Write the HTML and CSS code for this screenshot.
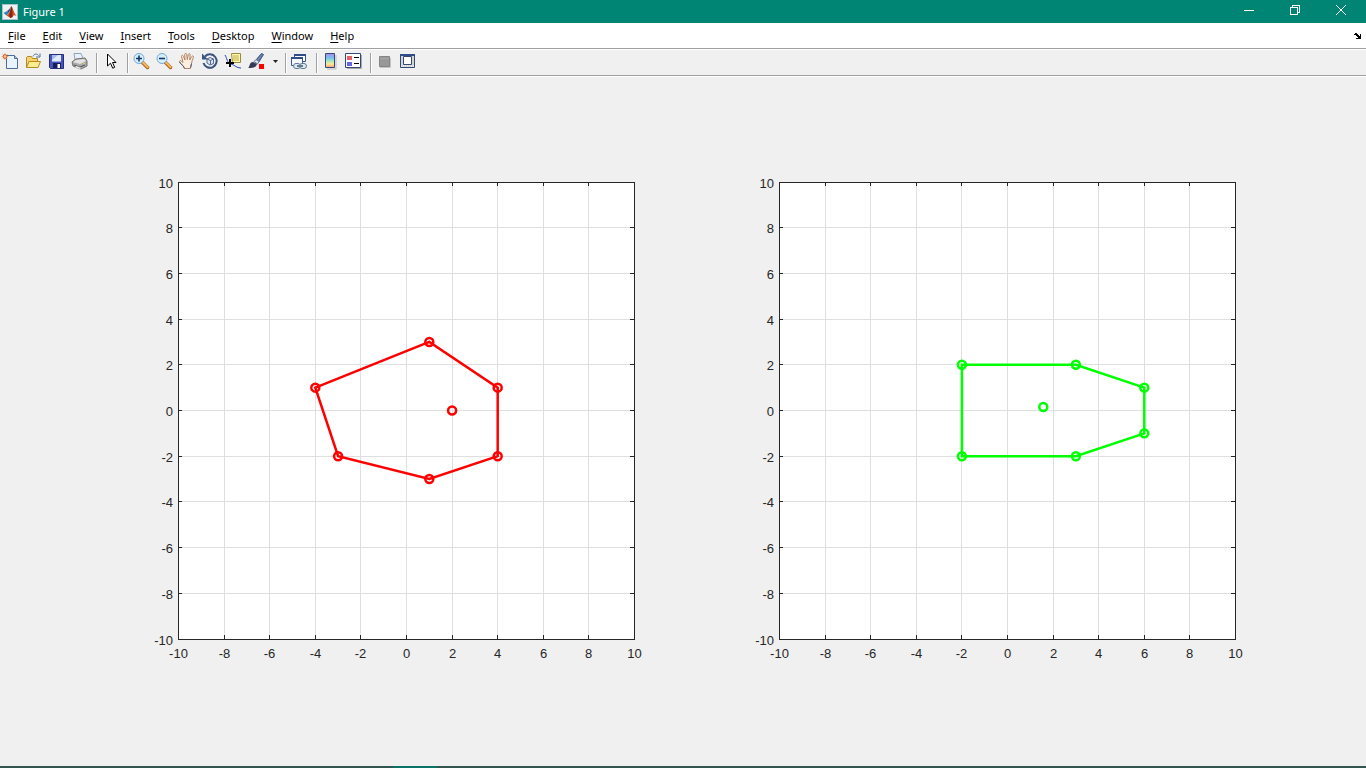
FILE: index.html
```html
<!DOCTYPE html>
<html lang="en">
<head>
<meta charset="utf-8">
<title>Figure 1</title>
<link rel="stylesheet" href="styles.css">
</head>
<body>
<div class="window">
  <header class="titlebar">
    <svg class="logo" width="16" height="16" viewBox="0 0 16 16" aria-hidden="true">
      <rect x=".5" y=".5" width="15" height="15" fill="#eef2f5" stroke="#a9c3cc"/>
      <path d="M1.500 9 5 7l2 2-2.500 2.500Z" fill="#3c7fb5"/>
      <path d="M5 7 7 5.500 9.500 2 7 9Z" fill="#28507c"/>
      <path d="M9.500 2C11 4 12 9 14.500 12c-2-1-3-1-4 1L8.500 14 4.500 11.500 7 9Z" fill="#d75420"/>
      <path d="M9.500 2c1 3 1 7 1 11L8.500 14 7 12Z" fill="#84251b"/>
    </svg>
    <h1 class="title">Figure 1</h1>
    <div class="controls">
      <button class="control" aria-label="Minimize"><svg width="12" height="12"><path d="M1 6.500h10"/></svg></button>
      <button class="control" aria-label="Restore"><svg width="12" height="12"><path d="M1.500 3.500h7v7h-7zM3.500 3V1.500h7v7H9"/></svg></button>
      <button class="control" aria-label="Close"><svg class="smooth" width="12" height="12"><path d="m1 1 10 10M11 1 1 11"/></svg></button>
    </div>
  </header>

  <nav class="menubar" aria-label="Menu">
    <button class="menu"><u>F</u>ile</button>
    <button class="menu"><u>E</u>dit</button>
    <button class="menu"><u>V</u>iew</button>
    <button class="menu"><u>I</u>nsert</button>
    <button class="menu"><u>T</u>ools</button>
    <button class="menu"><u>D</u>esktop</button>
    <button class="menu"><u>W</u>indow</button>
    <button class="menu"><u>H</u>elp</button>
    <button class="dock" aria-label="Dock figure"><svg width="8" height="6"><path d="M0 1h1V0h2v1h1v1h1v1h1V1h1v5H2V5h2V4H3V3H2V2H0Z" fill="#000"/></svg></button>
  </nav>

  <div class="toolbar" role="toolbar" aria-label="Figure toolbar">
    <button class="tool" aria-label="New figure"><svg width="18" height="18" viewBox="0 0 18 18">
      <path d="M5.500 3.500h8l3 3v10h-11z" fill="#e8f3fd" stroke="#4c6b9d"/><path d="M13.500 3.500v3h3" fill="#b5cbea" stroke="#4c6b9d"/>
      <path d="M4 1v7M.500 4.500h7M1.500 2l5 5M6.500 2l-5 5" stroke="#f2b48c"/><circle cx="4" cy="4.500" r="1.800" fill="#fbd08c" stroke="#d4552d"/></svg></button>
    <button class="tool" aria-label="Open file"><svg width="18" height="18" viewBox="0 0 18 18">
      <path d="M2.500 15.500v-10l1-1h4l1 2h5v9z" fill="#f5d36a" stroke="#b58b22"/><path d="m2.500 15.500 2.500-6h11.500l-2.500 6z" fill="#ffed91" stroke="#b58b22"/>
      <path d="M9 4.500c1-3 4-3 5.500-1M16 1.500v3.500h-4" fill="none" stroke="#4d6f94"/></svg></button>
    <button class="tool" aria-label="Save figure"><svg width="18" height="18" viewBox="0 0 18 18">
      <path d="M2.500 2.500h14v14h-13l-1-1z" fill="#4756bd" stroke="#252c84"/><path d="M5 3h9v6.500H5z" fill="#e2eafa"/><path d="M5 3h6L5 8z" fill="#a3b8f0"/><path d="M6 11h8v5H6z" fill="#171e55"/><path d="M10.500 12H13v4h-2.500z" fill="#fff"/></svg></button>
    <button class="tool" aria-label="Print figure"><svg width="18" height="18" viewBox="0 0 18 18">
      <path d="m5 8-1-6.500h7l2.500 6" fill="#e7f1fc" stroke="#90a4b9"/><path d="m2 10 4-3 9-1 2 3v5l-6 3-8-3z" fill="#aaa" stroke="#6f6f6f"/><path d="m3 10 7 2 6-3-2-2-8 1z" fill="#e4e4e4"/><path d="m4 13 6 2 5-2" fill="none" stroke="#505050"/><path d="m4.500 15 5 2 2-1-5-2z" fill="#fff" stroke="#999" stroke-width=".5"/><path d="M13 11h2v1h-2z" fill="#d7ce52"/></svg></button>
    <span class="sep"></span>
    <button class="tool" aria-label="Edit plot"><svg width="18" height="18" viewBox="0 0 18 18">
      <path d="M6.500 2v12l3-2.800 2.200 5 2-.9-2.200-4.800h3.500z" fill="#fff" stroke="#000"/></svg></button>
    <span class="sep"></span>
    <button class="tool" aria-label="Zoom in"><svg width="18" height="18" viewBox="0 0 18 18">
      <path d="m10.500 10.500 5 5" stroke="#a86825" stroke-width="3.500" stroke-linecap="round"/><path d="m11 10.500 4.500 4.500" stroke="#f5b85c" stroke-width="2" stroke-linecap="round"/><circle cx="7" cy="6.500" r="5" fill="#d5effb" stroke="#76a7d3"/><path d="M4 6.500h6M7 3.500v6" stroke="#16346f" stroke-width="1.600"/></svg></button>
    <button class="tool" aria-label="Zoom out"><svg width="18" height="18" viewBox="0 0 18 18">
      <path d="m10.500 10.500 5 5" stroke="#a86825" stroke-width="3.500" stroke-linecap="round"/><path d="m11 10.500 4.500 4.500" stroke="#f5b85c" stroke-width="2" stroke-linecap="round"/><circle cx="7" cy="6.500" r="5" fill="#d5effb" stroke="#76a7d3"/><path d="M4 6.500h6" stroke="#16346f" stroke-width="1.600"/></svg></button>
    <button class="tool" aria-label="Pan"><svg width="18" height="18" viewBox="0 0 18 18">
      <path d="M6.500 16.500c-1-3-3-4-5-6.500-.5-1.500 1.200-1.800 2-.8l1.500 1.300L3.500 4.500c0-1.500 1.500-1.500 2 0L7 8 6.700 2.500c0-1.500 1.800-1.500 2 0L9.300 7.500l1-5c.3-1.300 1.900-1 1.800.300l-.4 5.200 2.100-3.500c.7-1.200 2-.5 1.600.7-1 3-1.400 4-1.900 6.300l-1 5z" fill="#ffeedd" stroke="#b08466"/><path d="M1.500 10c1.500 2.500 4 3.500 5 6.500M13.500 11.500l-1 4" fill="none" stroke="#4c5680"/></svg></button>
    <button class="tool" aria-label="Rotate 3D"><svg width="18" height="18" viewBox="0 0 18 18">
      <path d="M4 4.500a6.700 6.700 0 1 1-1.500 6.500" fill="none" stroke="#3a537f" stroke-width="2"/><path d="M1 1.500v6h6z" fill="#3a537f"/><path d="m6 7 3-1.500L12.500 7v4.500L9 13l-3-2z" fill="#dce6f5" stroke="#52678f"/><path d="m6 7 3.500 1.500 3-1.500M9.500 8.500v4" fill="none" stroke="#52678f"/></svg></button>
    <button class="tool" aria-label="Data cursor"><svg width="18" height="18" viewBox="0 0 18 18">
      <path d="M7.500 1.500h9v9h-8z" fill="#fff9a8" stroke="#9c8b3c"/><path d="M9 4h6M9 6h6M9 8h6" stroke="#bcad56"/><path d="M1 3c2 3 2 8 6 9s5 4 10 4" fill="none" stroke="#2742c5"/><path d="M2 11h8M6 7v8" stroke="#000" stroke-width="2"/></svg></button>
    <button class="tool" aria-label="Brush data"><svg width="18" height="18" viewBox="0 0 18 18">
      <path d="m8.500 8.500 6-7 2 1-5 8z" fill="#6e83ad" stroke="#344b7c"/><path d="m7 9.500 2-2 3 2-1.500 2.500z" fill="#e1e5eb" stroke="#68748b"/><path d="M1 16c2-1 1-6 5-6l4 2c-1 4-5 4-9 4z" fill="#343b57"/><path d="M12 12h5v5h-5z" fill="#f00"/></svg></button>
    <button class="drop" aria-label="Brush options"><svg width="5" height="3"><path d="M0 0h5L2.500 3z" fill="#222"/></svg></button>
    <span class="sep"></span>
    <button class="tool" aria-label="Link plot"><svg width="18" height="18" viewBox="0 0 18 18">
      <path d="M4.500 2.500h11v7h-11z" fill="#fff" stroke="#3c558b"/><path d="M4 2h12v2H4z" fill="#2e4d89"/><path d="M1.500 5.500h11v8h-11z" fill="#f4f8ff" stroke="#3c558b"/><path d="M1 5h12v2H1z" fill="#2e4d89"/><rect x="3.500" y="11.500" width="7" height="5" rx="2.500" fill="#dce9f1" stroke="#607b8d"/><rect x="9.500" y="11.500" width="7" height="5" rx="2.500" fill="#dce9f1" stroke="#607b8d"/><path d="M7 14h6" stroke="#607b8d" stroke-width="2"/></svg></button>
    <span class="sep"></span>
    <button class="tool" aria-label="Insert colorbar"><svg width="18" height="18" viewBox="0 0 18 18">
      <defs><linearGradient id="bar" x2="0" y2="1"><stop stop-color="#b48ae6"/><stop offset=".3" stop-color="#77bdf1"/><stop offset=".55" stop-color="#a6e8bd"/><stop offset=".75" stop-color="#ffe898"/><stop offset="1" stop-color="#f89b82"/></linearGradient></defs><path d="M6 17h9V3" fill="none" stroke="#bbb"/><path d="M4.500 1.500h9v14h-9z" fill="url(#bar)" stroke="#334a79"/></svg></button>
    <button class="tool" aria-label="Insert legend"><svg width="18" height="18" viewBox="0 0 18 18">
      <path d="M3 16.500h14.500V3" fill="none" stroke="#aaa"/><path d="M1.500 1.500h15v14h-15z" fill="#fff" stroke="#334a79"/><path d="M3 4h5v4H3z" fill="#e96060"/><path d="M3 10h5v4H3z" fill="#6565e5"/><path d="M10 5.500h5M10 11.500h5" stroke="#000"/></svg></button>
    <span class="sep"></span>
    <button class="tool" aria-label="Hide plot tools"><svg width="18" height="18" viewBox="0 0 18 18">
      <path d="M5 15.500h10.500V6" fill="none" stroke="#c3c3c3"/><path d="M4.500 4.500h10v10h-10z" fill="#989898" stroke="#858585"/><path d="M5 6.500h9" stroke="#a7a7a7"/></svg></button>
    <button class="tool" aria-label="Show plot tools"><svg width="18" height="18" viewBox="0 0 18 18">
      <path d="M2.500 2.500h14v13h-14z" fill="#d4d4d4" stroke="#334a79"/><path d="M2 2h15v2H2z" fill="#2e4d89"/><path d="M5.500 4.500h8v8h-8z" fill="#fff" stroke="#334a79"/><path d="M3 14h13" stroke="#fff" stroke-dasharray="1 1"/></svg></button>
  </div>

  <main class="figure">
    <svg class="plot" id="left-plot" width="521" height="503" role="img" aria-label="Red polygon plot"></svg>
    <svg class="plot" id="right-plot" width="521" height="503" role="img" aria-label="Green polygon plot"></svg>
  </main>
  <footer class="edge"><span class="edge-active"></span></footer>
</div>
<script src="plot.js"></script>
</body>
</html>
```
FILE: styles.css
```css
* { box-sizing: border-box; }
body {
  margin: 0;
  background: #f0f0f0;
  color: #000;
  font-family: "Noto Sans", "Open Sans", sans-serif;
  font-size: 11px;
}
button {
  margin: 0;
  padding: 0;
  border: 0;
  background: none;
  color: inherit;
  font: inherit;
}
svg { display: block; }
.window { display: flex; flex-direction: column; min-height: 100vh; }
.titlebar {
  display: flex;
  align-items: center;
  height: 23px;
  padding-left: 2px;
  background: #008575;
  color: #fff;
}
.title { margin: 0 0 0 5px; font-size: 11px; font-weight: 400; }
.controls { display: flex; margin: 0 2px 0 auto; }
.control {
  display: flex;
  justify-content: center;
  width: 46px;
  padding-bottom: 3px;
}
.control path {
  fill: none;
  stroke: #fff;
  shape-rendering: crispEdges;
}
.control .smooth path { shape-rendering: auto; }
.menubar {
  display: flex;
  align-items: center;
  gap: 17px;
  height: 26px;
  padding: 0 4px 0 8px;
  border-bottom: 1px solid #a0a0a0;
  background: #fff;
}
.menu u { text-underline-offset: 2px; }
.dock { margin-left: auto; }
.toolbar {
  display: flex;
  align-items: center;
  height: 28px;
  border-top: 1px solid #fff;
  border-bottom: 1px solid #fff;
  box-shadow: inset 0 -1px #a0a0a0;
}
.tool {
  display: flex;
  justify-content: center;
  width: 23px;
  padding: 0 3px 4px 0;
}
.tool svg { flex: none; fill: none; }
.drop { display: flex; justify-content: center; width: 12px; padding-bottom: 3px; }
.sep {
  width: 8px;
  height: 20px;
  background: linear-gradient(to right, transparent 4px, #a0a0a0 4px 5px, #fff 5px 6px, transparent 6px);
}
.figure {
  display: grid;
  flex: 1;
  grid-template-columns: 1fr 1fr;
  place-items: center;
  padding: 0 58px 0 106px;
}
.plot {
  font-family: "Liberation Sans", Arial, sans-serif;
  font-size: 13px;
}
.area { fill: #fff; }
.grid { stroke: #262626; stroke-opacity: .15; shape-rendering: crispEdges; }
.axis { fill: none; stroke: #262626; shape-rendering: crispEdges; }
.label { fill: #262626; }
.label-x { text-anchor: middle; }
.label-y { text-anchor: end; }
.series { fill: none; stroke-width: 2.5px; }
.red { stroke: #f00; }
.green { stroke: #0f0; }
.edge { height: 2px; padding-left: 393px; background: #33554f; }
.edge-active { display: block; width: 44px; height: 2px; background: #0b7267; }
```
FILE: plot.js
```js
const LEFT = 32, TOP = 12, WIDTH = 456, HEIGHT = 457;
const px = v => LEFT + 0.5 + (v + 10) / 20 * WIDTH;
const py = v => TOP + (10 - v) / 20 * HEIGHT;
const snap = v => Math.floor(v) + 0.5;

function draw(id, color, points, centre) {
  const right = LEFT + WIDTH, bottom = TOP + HEIGHT;
  let grid = '', ticks = '', labels = '';
  for (let v = -10; v <= 10; v += 2) {
    const x = snap(px(v)), y = snap(py(v));
    if (Math.abs(v) < 10) {
      grid += `M${x} ${TOP + 1}V${bottom}M${LEFT + 1} ${y}H${right}`;
      ticks += `M${x} ${TOP}v4M${x} ${bottom + 1}v-5M${LEFT} ${y}h4M${right + 1} ${y}h-5`;
    }
    labels += `<text class="label label-x" x="${x}" y="${bottom + 19}">${v}</text>`;
    labels += `<text class="label label-y" x="${LEFT - 5}" y="${y + 5}">${v}</text>`;
  }
  const path = points.map(([x, y]) => `${px(x)},${py(y)}`).join(' ');
  const markers = [...points, centre]
    .map(([x, y]) => `<circle cx="${px(x)}" cy="${py(y)}" r="4"/>`).join('');
  document.getElementById(id).innerHTML =
    `<rect class="area" x="${LEFT}" y="${TOP}" width="${WIDTH}" height="${HEIGHT}"/>
     <path class="grid" d="${grid}"/>
     <path class="axis" d="M${LEFT + 0.5} ${TOP + 0.5}h${WIDTH}v${HEIGHT}h-${WIDTH}z${ticks}"/>
     ${labels}
     <g class="series ${color}"><polygon points="${path}"/>${markers}</g>`;
}

draw('left-plot', 'red', [[-4, 1], [1, 3], [4, 1], [4, -2], [1, -3], [-3, -2]], [2, 0]);
draw('right-plot', 'green', [[-2, 2], [3, 2], [6, 1], [6, -1], [3, -2], [-2, -2]], [1.57, 0.15]);
```
